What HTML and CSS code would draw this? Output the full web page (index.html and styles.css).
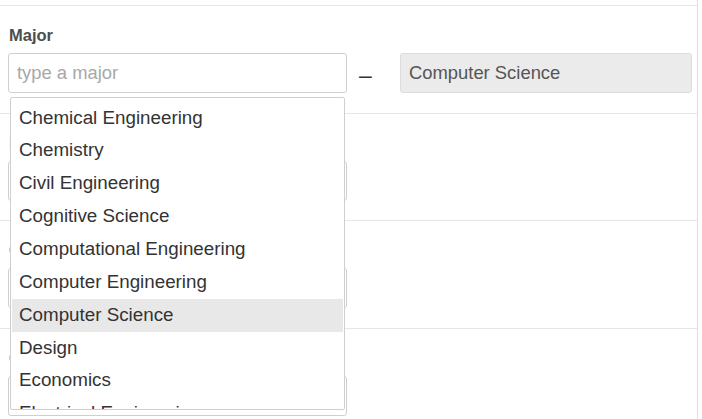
FILE: index.html
```html
<!DOCTYPE html>
<html>
<head>
<meta charset="utf-8">
<link rel="stylesheet" href="styles.css">
</head>
<body>
<div class="panel">
  <section class="field">
    <label class="label">Major</label>
    <div class="row">
      <div class="combo">
        <input class="input" type="text" placeholder="type a major">
        <ul class="menu">
          <li class="item">Chemical Engineering</li>
          <li class="item">Chemistry</li>
          <li class="item">Civil Engineering</li>
          <li class="item">Cognitive Science</li>
          <li class="item">Computational Engineering</li>
          <li class="item">Computer Engineering</li>
          <li class="item active">Computer Science</li>
          <li class="item">Design</li>
          <li class="item">Economics</li>
          <li class="item">Electrical Engineering</li>
          <li class="item">English</li>
        </ul>
      </div>
      <span class="dash">–</span>
      <input class="input disabled" type="text" value="Computer Science" disabled>
    </div>
  </section>
  <section class="field">
    <label class="label">Minor</label>
    <div class="row">
      <input class="input single" type="text">
    </div>
  </section>
  <section class="field">
    <label class="label">Class Year</label>
    <div class="row">
      <input class="input single" type="text">
    </div>
  </section>
  <section class="field">
    <label class="label">College</label>
    <div class="row">
      <input class="input single" type="text">
    </div>
  </section>
</div>
</body>
</html>
```
FILE: styles.css
```css
html, body {
  margin: 0;
  padding: 0;
  background: #fff;
  font-family: "Liberation Sans", Arial, Helvetica, sans-serif;
  overflow: hidden;
}

.panel {
  box-sizing: border-box;
  width: 698px;
  height: 419px;
  padding-top: 5px;
  border-right: 1px solid #dedede;
  overflow: hidden;
}

.field {
  box-sizing: border-box;
  height: 107.6px;
  border-top: 1px solid #e6e6e6;
  padding-top: 19px;
}

.label {
  display: block;
  padding-left: 9px;
  font-size: 16.5px;
  line-height: 20px;
  font-weight: bold;
  color: #4d4d4d;
}

.row {
  display: flex;
  align-items: center;
  margin-top: 8px;
  padding-left: 8px;
  padding-right: 5px;
}

.combo {
  position: relative;
  width: 339px;
  flex: none;
}

.input {
  box-sizing: border-box;
  display: block;
  width: 339px;
  height: 40px;
  margin: 0;
  padding: 0 8px;
  border: 1px solid #cfcfcf;
  border-radius: 3px;
  font-family: "Liberation Sans", Arial, Helvetica, sans-serif;
  font-size: 18.4px;
  color: #555;
  background: #fff;
  outline: none;
}

.input::placeholder {
  color: #a8a8a8;
}

.input.disabled {
  flex: 1;
  width: auto;
  background: #ebebeb;
  border-color: #dcdcdc;
  color: #555;
  -webkit-text-fill-color: #555;
}

.dash {
  flex: none;
  width: 41px;
  padding-left: 12px;
  font-size: 23px;
  line-height: 40px;
  color: #333;
  position: relative;
  top: 2px;
}

.menu {
  position: absolute;
  left: 2px;
  top: 44px;
  box-sizing: border-box;
  width: 335px;
  height: 313px;
  margin: 0;
  padding: 3.6px 1px 0 1px;
  list-style: none;
  background: #fff;
  border: 1px solid #cfcfcf;
  border-radius: 2px;
  overflow: hidden;
  z-index: 2;
}

.item {
  padding: 5px 7px;
  font-size: 18.8px;
  line-height: 22.86px;
  color: #333;
  white-space: nowrap;
}

.item.active {
  background: #e8e8e8;
}
```
